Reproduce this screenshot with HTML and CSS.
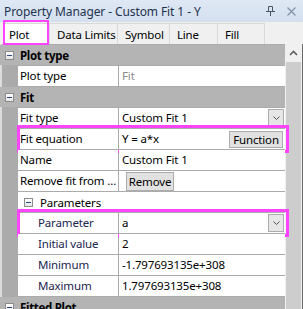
FILE: index.html
```html
<!DOCTYPE html>
<html lang="en">
<head>
    <meta charset="UTF-8">
    <title>Property Manager</title>
    <link rel="stylesheet" href="styles.css">
</head>
<body>
    <div class="window">
        <div class="titlebar">
            <span class="title">Property Manager - Custom Fit 1 - Y</span>
            <svg class="pin" width="9" height="10" viewBox="0 0 9 10">
                <path d="M2.5 0.5h4v5h-4z M0 5.5h9 M4.5 6v4" fill="none" stroke="#4a5568" stroke-width="1"/>
            </svg>
            <svg class="close" width="9" height="9" viewBox="0 0 9 9">
                <path d="M0.5 0.5l8 8 M8.5 0.5l-8 8" stroke="#7f8fa6" stroke-width="1.1"/>
            </svg>
        </div>
        <div class="tabs">
            <div class="tab active hl">Plot</div>
            <div class="tab w68">Data Limits</div>
            <div class="tab w52">Symbol</div>
            <div class="tab w48">Line</div>
            <div class="tab w47">Fill</div>
        </div>
        <div class="panel">
            <div class="props">
                <div class="cat"><span class="minus"></span>Plot type</div>
                <div class="row">
                    <div class="name">Plot type</div>
                    <div class="val muted">Fit</div>
                </div>
                <div class="cat"><span class="minus"></span>Fit</div>
                <div class="row">
                    <div class="name">Fit type</div>
                    <div class="val">Custom Fit 1<span class="drop"><svg width="7" height="4" viewBox="0 0 7 4"><path d="M0.5 0.5l3 3 3-3" fill="none" stroke="#555" stroke-width="1"/></svg></span></div>
                </div>
                <div class="row hl">
                    <div class="name">Fit equation</div>
                    <div class="val">Y = a*x<span class="btn fn">Function</span></div>
                </div>
                <div class="row">
                    <div class="name">Name</div>
                    <div class="val">Custom Fit 1</div>
                </div>
                <div class="row">
                    <div class="name">Remove fit from ...</div>
                    <div class="val"><span class="btn rm">Remove</span></div>
                </div>
                <div class="row">
                    <div class="sub"><span class="minus"></span>Parameters</div>
                </div>
                <div class="row hl">
                    <div class="name inner">Parameter</div>
                    <div class="val">a<span class="drop"><svg width="7" height="4" viewBox="0 0 7 4"><path d="M0.5 0.5l3 3 3-3" fill="none" stroke="#555" stroke-width="1"/></svg></span></div>
                </div>
                <div class="row">
                    <div class="name inner">Initial value</div>
                    <div class="val">2</div>
                </div>
                <div class="row">
                    <div class="name inner">Minimum</div>
                    <div class="val">-1.797693135e+308</div>
                </div>
                <div class="row">
                    <div class="name inner">Maximum</div>
                    <div class="val">1.797693135e+308</div>
                </div>
                <div class="cat"><span class="minus"></span>Fitted Plot</div>
            </div>
            <div class="scrollbar">
                <div class="arrow">
                    <svg width="9" height="6" viewBox="0 0 9 6"><path d="M1 5l3.5-3.5 3.5 3.5" fill="none" stroke="#606060" stroke-width="1.6"/></svg>
                </div>
                <div class="thumb"></div>
            </div>
        </div>
    </div>
</body>
</html>
```

FILE: styles.css
```css
body {
    margin: 0;
    padding: 0;
    font-family: 'Noto Sans', sans-serif;
    font-size: 11.5px;
    letter-spacing: -0.15px;
    color: #000;
    background: #f0f0f0;
}
.window {
    width: 303px;
    height: 309px;
    overflow: hidden;
    display: flex;
    flex-direction: column;
}
.titlebar {
    height: 22px;
    flex-shrink: 0;
    display: flex;
    align-items: center;
    padding-left: 4px;
    background: linear-gradient(#dfe8f4, #d4e0ef);
    color: #1e3250;
    font-size: 12px;
    letter-spacing: -0.1px;
}
.title {
    flex: 1;
}
.pin {
    margin-right: 12px;
}
.close {
    margin-right: 7px;
}
.tabs {
    height: 22px;
    flex-shrink: 0;
    display: flex;
    padding-left: 3px;
    background: #f0f0f0;
    letter-spacing: -0.2px;
}
.tab {
    height: 21px;
    margin-top: 1px;
    box-sizing: border-box;
    padding-left: 7px;
    line-height: 21px;
    white-space: nowrap;
    border: 1px solid #d9d9d9;
    border-bottom: none;
    border-left: none;
}
.tab.active {
    width: 47px;
    padding-left: 6px;
    background: #fff;
    position: relative;
}
.tab.hl::after {
    content: "";
    position: absolute;
    left: 0;
    right: 0;
    top: -4px;
    bottom: -1px;
    border: 2px solid #ff44ff;
}
.w68 { width: 68px; }
.w52 { width: 52px; }
.w48 { width: 48px; }
.w47 { width: 47px; }
.panel {
    flex: 1;
    display: flex;
    border-right: 1px solid #6a6a6a;
}
.props {
    width: 285px;
    background: #ababab;
    padding-top: 1px;
    border-left: 2px solid #dcdcdc;
    box-sizing: border-box;
}
.cat {
    height: 20px;
    margin-bottom: 1px;
    display: flex;
    align-items: center;
    font-weight: bold;
    letter-spacing: -0.3px;
    background: #b4b4b4;
    margin-left: -2px;
    padding-left: 5px;
}
.cat .minus {
    margin-right: 6px;
}
.minus {
    width: 9px;
    height: 9px;
    box-sizing: border-box;
    border: 1px solid #8c8c8c;
    background: linear-gradient(#ffffff, #e4e4e4);
    position: relative;
    flex-shrink: 0;
}
.minus::before {
    content: "";
    position: absolute;
    left: 1px;
    right: 1px;
    top: 3px;
    height: 1px;
    background: #2b4b7e;
}
.row {
    height: 20px;
    margin-bottom: 1px;
    display: flex;
    padding-left: 16px;
    position: relative;
}
.row.hl::after {
    content: "";
    position: absolute;
    left: 15px;
    right: -4px;
    top: -4px;
    bottom: -4px;
    border: 3px solid #ff44ff;
    pointer-events: none;
}
.name {
    width: 100px;
    box-sizing: border-box;
    background: #fff;
    padding-left: 2px;
    line-height: 20px;
    white-space: nowrap;
    overflow: hidden;
}
.name.inner {
    padding-left: 20px;
    color: #1c2450;
}
.val {
    flex: 1;
    margin-left: 1px;
    background: #fff;
    padding-left: 3px;
    line-height: 20px;
    display: flex;
    white-space: nowrap;
}
.muted {
    color: #8c8c8c;
}
.sub {
    flex: 1;
    background: #fff;
    display: flex;
    align-items: center;
    padding-left: 6px;
}
.sub .minus {
    margin-right: 7px;
}
.drop {
    margin-left: auto;
    margin-right: 1px;
    margin-top: 1px;
    width: 16px;
    height: 18px;
    box-sizing: border-box;
    border: 1px solid #acacac;
    background: #e6e6e6;
    display: flex;
    align-items: center;
    justify-content: center;
}
.btn {
    box-sizing: border-box;
    border: 1px solid #adadad;
    background: #e1e1e1;
    line-height: 15px;
    text-align: center;
}
.fn {
    margin-left: auto;
    margin-right: 2px;
    margin-top: 2px;
    width: 54px;
    height: 17px;
}
.rm {
    margin-left: 4px;
    margin-top: 1px;
    width: 48px;
    height: 19px;
    line-height: 17px;
}
.scrollbar {
    width: 17px;
    background: #f0f0f0;
    display: flex;
    flex-direction: column;
    align-items: center;
}
.arrow {
    height: 18px;
    display: flex;
    align-items: center;
    justify-content: center;
}
.thumb {
    width: 15px;
    flex: 1;
    background: #cdcdcd;
}
```
